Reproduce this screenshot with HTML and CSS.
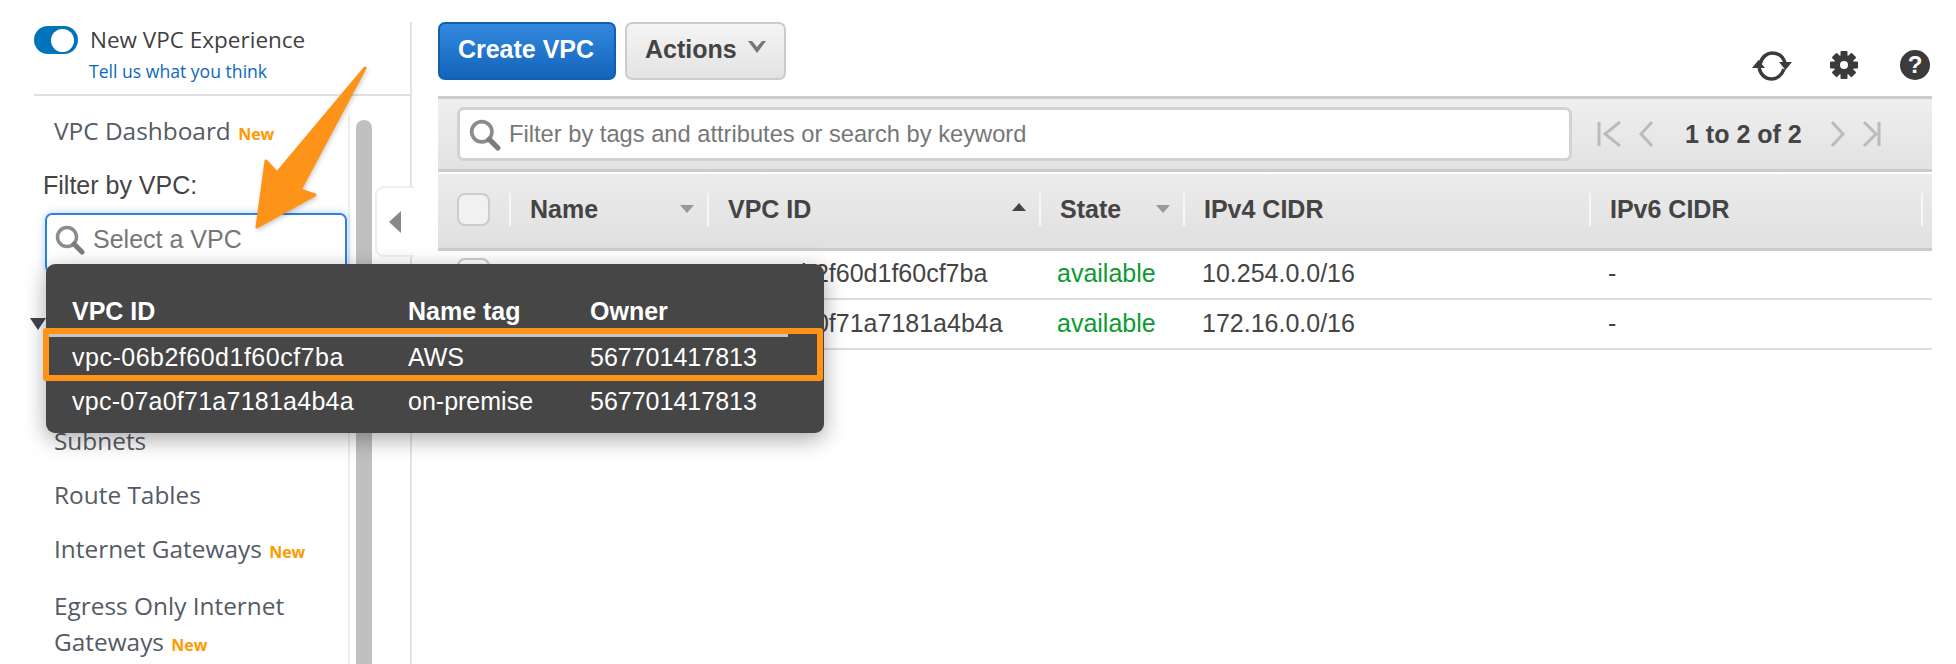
FILE: index.html
```html
<!DOCTYPE html>
<html lang="en">
<head>
    <meta charset="UTF-8">
    <title>VPC Dashboard</title>
    <link rel="stylesheet" href="styles.css">
</head>
<body>
<div class="app">
    <aside class="sidebar">
        <div class="experience">
            <span class="toggle"><span class="toggle-knob"></span></span>
            <div>
                <div class="experience-title">New VPC Experience</div>
                <a class="experience-link">Tell us what you think</a>
            </div>
        </div>
        <div class="rail">
            <nav class="nav">
                <div class="nav-item nav-first">VPC Dashboard <span class="new">New</span></div>
                <label class="filter-label">Filter by VPC:</label>
                <div class="filter-input">
                    <svg class="search-icon" width="30" height="30" viewBox="0 0 30 30"><circle cx="12" cy="12" r="9.5"/><path class="handle" d="M19 19l8 8"/></svg>
                    <span>Select a VPC</span>
                </div>
                <div class="nav-section"><span class="section-arrow"></span></div>
                <div class="nav-item">Subnets</div>
                <div class="nav-item">Route Tables</div>
                <div class="nav-item">Internet Gateways <span class="new">New</span></div>
                <div class="nav-item nav-wrap">Egress Only Internet<br>Gateways <span class="new">New</span></div>
            </nav>
            <div class="scroll"><div class="scroll-thumb"></div></div>
            <div class="collapse-col"><div class="collapse-tab"><span class="collapse-arrow"></span></div></div>
        </div>
    </aside>

    <main class="main">
        <div class="toolbar">
            <button class="btn btn-primary">Create VPC</button>
            <button class="btn btn-default">Actions
                <svg width="18" height="12" viewBox="0 0 18 12"><path d="M0 0l4 0 5 6 5-6 4 0-9 12z" fill="#777"/></svg>
            </button>
            <div class="tools">
                <svg width="40" height="30" viewBox="0 0 40 30" class="tool-refresh"><path d="M8 13C10 5 16 2 20 2c6 0 11 3 13 10"/><path d="M32 18c-2 6-7 10-12 10-7 0-11-4-13-11"/><path class="fill" d="M0 17h13L6.500 9zM27 11h13l-6.500 8z"/></svg>
                <svg width="28" height="28" viewBox="0 0 28 28">
                    <g fill="#3b3b3b">
                        <rect x="10.500" y="0" width="7" height="28" rx="1"/>
                        <rect x="10.500" y="0" width="7" height="28" rx="1" transform="rotate(45 14 14)"/>
                        <rect x="10.500" y="0" width="7" height="28" rx="1" transform="rotate(90 14 14)"/>
                        <rect x="10.500" y="0" width="7" height="28" rx="1" transform="rotate(135 14 14)"/>
                        <circle cx="14" cy="14" r="10"/>
                    </g>
                    <circle cx="14" cy="14" r="4" fill="#fff"/>
                </svg>
                <span class="help">?</span>
            </div>
        </div>

        <div class="filter-bar">
            <div class="search-box">
                <svg class="search-icon" width="32" height="32" viewBox="0 0 30 30"><circle cx="12" cy="12" r="9.500"/><path class="handle" d="M19 19l8 8"/></svg>
                <span>Filter by tags and attributes or search by keyword</span>
            </div>
            <div class="pager">
                <svg width="24" height="26" viewBox="0 0 24 26"><path d="M2 1v24M23 1L8 13l15 12"/></svg>
                <svg width="14" height="26" viewBox="0 0 14 26"><path d="M13 1L2 13l11 12"/></svg>
                <span class="pager-text">1 to 2 of 2</span>
                <svg width="14" height="26" viewBox="0 0 14 26"><path d="M1 1l11 12L1 25"/></svg>
                <svg width="18" height="26" viewBox="0 0 18 26"><path d="M1 1l12 12L1 25M16 1v24"/></svg>
            </div>
        </div>

        <table class="grid">
            <colgroup>
                <col class="col-check"><col class="col-name"><col class="col-id"><col class="col-state"><col class="col-cidr"><col class="col-id"><col class="col-end">
            </colgroup>
            <thead>
                <tr>
                    <th class="cell-check"><span class="check"></span></th>
                    <th><div class="th-in">Name<span class="sort sort-down"></span></div></th>
                    <th><div class="th-in">VPC ID<span class="sort sort-up"></span></div></th>
                    <th><div class="th-in">State<span class="sort sort-down"></span></div></th>
                    <th><div class="th-in">IPv4 CIDR</div></th>
                    <th><div class="th-in">IPv6 CIDR</div></th>
                    <th><div class="th-in"></div></th>
                </tr>
            </thead>
            <tbody>
                <tr>
                    <td class="cell-check"><span class="check"></span></td>
                    <td>AWS</td>
                    <td>vpc-06b2f60d1f60cf7ba</td>
                    <td class="state">available</td>
                    <td>10.254.0.0/16</td>
                    <td>-</td>
                    <td></td>
                </tr>
                <tr>
                    <td class="cell-check"><span class="check"></span></td>
                    <td>on-premise</td>
                    <td>vpc-07a0f71a7181a4b4a</td>
                    <td class="state">available</td>
                    <td>172.16.0.0/16</td>
                    <td>-</td>
                    <td></td>
                </tr>
            </tbody>
        </table>
    </main>

    <div class="popup">
        <div class="popup-row popup-head">
            <span>VPC ID</span><span>Name tag</span><span>Owner</span>
        </div>
        <div class="popup-row"><span class="popup-id">vpc-06b2f60d1f60cf7ba</span><span>AWS</span><span>567701417813</span></div>
        <div class="popup-row"><span class="popup-id popup-id-tight">vpc-07a0f71a7181a4b4a</span><span>on-premise</span><span>567701417813</span></div>
        <div class="popup-mark"></div>
    </div>

    <svg class="callout" width="130" height="175" viewBox="0 0 130 175">
        <path d="M117 8L52 130l15 5-58 32 9-66 11 12z" fill="#fd9419" stroke="#fd9419" stroke-width="3" stroke-linejoin="round"/>
    </svg>
</div>
</body>
</html>
```

FILE: styles.css
```css
* {
    box-sizing: border-box;
}
body {
    margin: 0;
    background-color: #fff;
    font-family: 'Liberation Sans', Arial, sans-serif;
    color: #444;
    overflow: hidden;
}
.app {
    position: relative;
    display: flex;
    width: 1956px;
    height: 664px;
    overflow: hidden;
}

/* left side */
.sidebar {
    width: 412px;
    margin-top: 22px;
    flex-shrink: 0;
    border-right: 2px solid #e3e3e3;
    font-family: 'Open Sans', sans-serif;
}
.experience {
    display: flex;
    gap: 12px;
    height: 74px;
    margin-left: 34px;
    padding-top: 4px;
    border-bottom: 2px solid #e0e0e0;
}
.toggle {
    display: flex;
    align-items: center;
    justify-content: flex-end;
    width: 44px;
    height: 28px;
    padding-right: 4px;
    border-radius: 14px;
    background-color: #0073bb;
}
.toggle-knob {
    width: 23px;
    height: 23px;
    border-radius: 50%;
    background-color: #fff;
}
.experience-title {
    font-size: 22.5px;
    line-height: 28px;
    color: #3f3f3f;
    white-space: nowrap;
}
.experience-link {
    display: block;
    margin-top: 5px;
    margin-left: -1px;
    font-size: 17.6px;
    line-height: 24px;
    color: #0b68bd;
}
.rail {
    display: flex;
    height: 568px;
}
.nav {
    width: 350px;
    padding-left: 54px;
    margin-top: 18px;
    border-right: 2px solid #eee;
    flex-shrink: 0;
}
.nav-item {
    height: 30px;
    margin-bottom: 24px;
    font-size: 24.4px;
    line-height: 30px;
    color: #545b64;
    white-space: nowrap;
}
.nav-first {
    margin-top: 2px;
    margin-bottom: 0;
}
.new {
    margin-left: 1px;
    font-size: 16px;
    font-weight: 700;
    color: #ff9900;
}
.filter-label {
    display: block;
    margin: 24px 0 13px -11px;
    font-family: 'Liberation Sans', Arial, sans-serif;
    font-size: 25px;
    line-height: 30px;
    color: #444;
}
.filter-input {
    display: flex;
    align-items: center;
    gap: 8px;
    width: 302px;
    height: 60px;
    margin-left: -9px;
    padding: 0 0 7px 8px;
    border: 2px solid #2f80dc;
    border-radius: 7px;
    box-shadow: 0 0 8px rgba(47, 128, 220, 0.35);
    font-family: 'Liberation Sans', Arial, sans-serif;
    font-size: 25px;
    color: #777;
}
.search-icon {
    flex-shrink: 0;
    fill: none;
    stroke: #8c8c8c;
    stroke-width: 3.500;
}
.search-icon .handle {
    stroke: #7d7d7d;
    stroke-width: 5;
    stroke-linecap: round;
}
.nav-section {
    position: relative;
    height: 30px;
    margin-top: 36px;
    margin-bottom: 87px;
}
.section-arrow {
    position: absolute;
    left: -24px;
    top: 9px;
    border-top: 12px solid #3d4650;
    border-left: 8px solid transparent;
    border-right: 8px solid transparent;
}
.nav-wrap {
    height: auto;
    margin-top: 22px;
    line-height: 36px;
}
.scroll {
    width: 25px;
    flex-shrink: 0;
    padding: 24px 3px 0 6px;
}
.scroll-thumb {
    height: 100%;
    border-radius: 8px 8px 0 0;
    background-color: #c0c0c0;
}
.collapse-col {
    width: 37px;
    padding-top: 90px;
}
.collapse-tab {
    display: flex;
    align-items: center;
    width: 39px;
    height: 71px;
    padding-left: 12px;
    border: 2px solid #eee;
    border-right: none;
    border-radius: 9px 0 0 9px;
    background-color: #fff;
}
.collapse-arrow {
    border-right: 12px solid #888;
    border-top: 11px solid transparent;
    border-bottom: 11px solid transparent;
}

/* right side */
.main {
    flex: 1;
    padding: 22px 24px 0 26px;
}
.toolbar {
    display: flex;
    align-items: flex-start;
    gap: 9px;
    height: 74px;
}
.btn {
    height: 58px;
    border-radius: 7px;
    font-family: 'Liberation Sans', Arial, sans-serif;
    font-size: 25px;
    font-weight: 700;
}
.btn-primary {
    width: 178px;
    padding: 0 2px 3px 0;
    border: 2px solid #1060b0;
    background: linear-gradient(#3388dd, #1265bb);
    color: #fff;
}
.btn-default {
    display: flex;
    align-items: center;
    gap: 11px;
    width: 161px;
    padding: 0 0 3px 18px;
    border: 2px solid #ccc;
    background: linear-gradient(#f4f4f4, #e3e3e3);
    color: #444;
}
.btn-default svg {
    margin-bottom: 6px;
}
.tools {
    display: flex;
    align-items: center;
    margin-left: auto;
    margin-top: 27px;
    margin-right: 2px;
}
.tool-refresh {
    margin-right: 38px;
    margin-top: 2px;
    fill: none;
    stroke: #3b3b3b;
    stroke-width: 3.500;
}
.tool-refresh .fill {
    fill: #3b3b3b;
    stroke: none;
}
.help {
    display: flex;
    align-items: center;
    justify-content: center;
    width: 30px;
    height: 30px;
    margin-left: 42px;
    border-radius: 50%;
    background-color: #3b3b3b;
    color: #fff;
    font-size: 24px;
    font-weight: 700;
}
.filter-bar {
    display: flex;
    align-items: center;
    height: 76px;
    padding-left: 19px;
    border-top: 3px solid #ccc;
    border-bottom: 3px solid #ccc;
    background: linear-gradient(#efefef, #e2e2e2);
}
.search-box {
    display: flex;
    align-items: center;
    gap: 8px;
    width: 1115px;
    height: 54px;
    padding-left: 9px;
    border: 3px solid #d2d2d2;
    border-radius: 7px;
    background-color: #fff;
    font-size: 23.7px;
    color: #777;
}
.search-box .search-icon {
    margin-top: 2px;
}
.pager {
    display: flex;
    align-items: center;
    margin-left: 25px;
    gap: 18px;
}
.pager svg {
    fill: none;
    stroke: #bbb;
    stroke-width: 3;
}
.pager-text {
    margin: 0 11px 0 14px;
    font-size: 25px;
    font-weight: 700;
    color: #444;
}
.grid {
    width: 1494px;
    margin-top: 2px;
    border-collapse: collapse;
    table-layout: fixed;
    font-size: 25px;
}
.col-check { width: 71px; }
.col-name { width: 198px; }
.col-id { width: 332px; }
.col-state { width: 144px; }
.col-cidr { width: 406px; }
.col-end { width: 11px; }
th {
    height: 75px;
    padding: 0 0 3px;
    background: linear-gradient(#ececec, #e0e0e0);
    border-bottom: 3px solid #ccc;
    text-align: left;
}
.th-in {
    display: flex;
    align-items: center;
    justify-content: space-between;
    height: 33px;
    padding: 0 13px 0 19px;
    border-left: 2px solid #f7f7f7;
}
td {
    height: 50px;
    padding: 0 0 2px 19px;
    border-bottom: 2px solid #ddd;
    white-space: nowrap;
}
.cell-check {
    padding: 0 0 0 19px;
}
th.cell-check {
    padding-bottom: 3px;
}
.check {
    display: block;
    width: 33px;
    height: 33px;
    border: 2px solid #ccc;
    border-radius: 8px;
    background-color: #f1f1f1;
}
td .check {
    background-color: #fff;
}
.state {
    color: #0c9a32;
    padding-left: 18px;
}
.sort {
    border-left: 7px solid transparent;
    border-right: 7px solid transparent;
}
.sort-down {
    border-top: 8px solid #999;
}
.sort-up {
    border-bottom: 8px solid #444;
    margin-bottom: 4px;
}

/* vpc picker over the page */
.popup {
    position: absolute;
    left: 46px;
    top: 264px;
    width: 778px;
    height: 169px;
    border-radius: 9px;
    background-color: #464646;
    box-shadow: 0 6px 22px rgba(0, 0, 0, 0.35);
    color: #fff;
    font-size: 25px;
}
.popup-row {
    display: grid;
    grid-template-columns: 336px 182px 1fr;
    height: 44px;
    padding-left: 26px;
    line-height: 44px;
}
.popup-id {
    letter-spacing: 0.5px;
}
.popup-id-tight {
    letter-spacing: 0.25px;
}
.popup-head {
    height: 73px;
    margin: 0 36px -2px 3px;
    padding: 25px 0 0 23px;
    border-bottom: 3px solid #c4c4c4;
    font-weight: 700;
}
.popup-mark {
    position: absolute;
    left: -3px;
    top: 64px;
    width: 780px;
    height: 53px;
    border: 6px solid #ff9317;
    border-radius: 3px;
}
.callout {
    position: absolute;
    left: 248px;
    top: 60px;
    filter: drop-shadow(1px 2px 2px rgba(0, 0, 0, 0.2));
}
```
